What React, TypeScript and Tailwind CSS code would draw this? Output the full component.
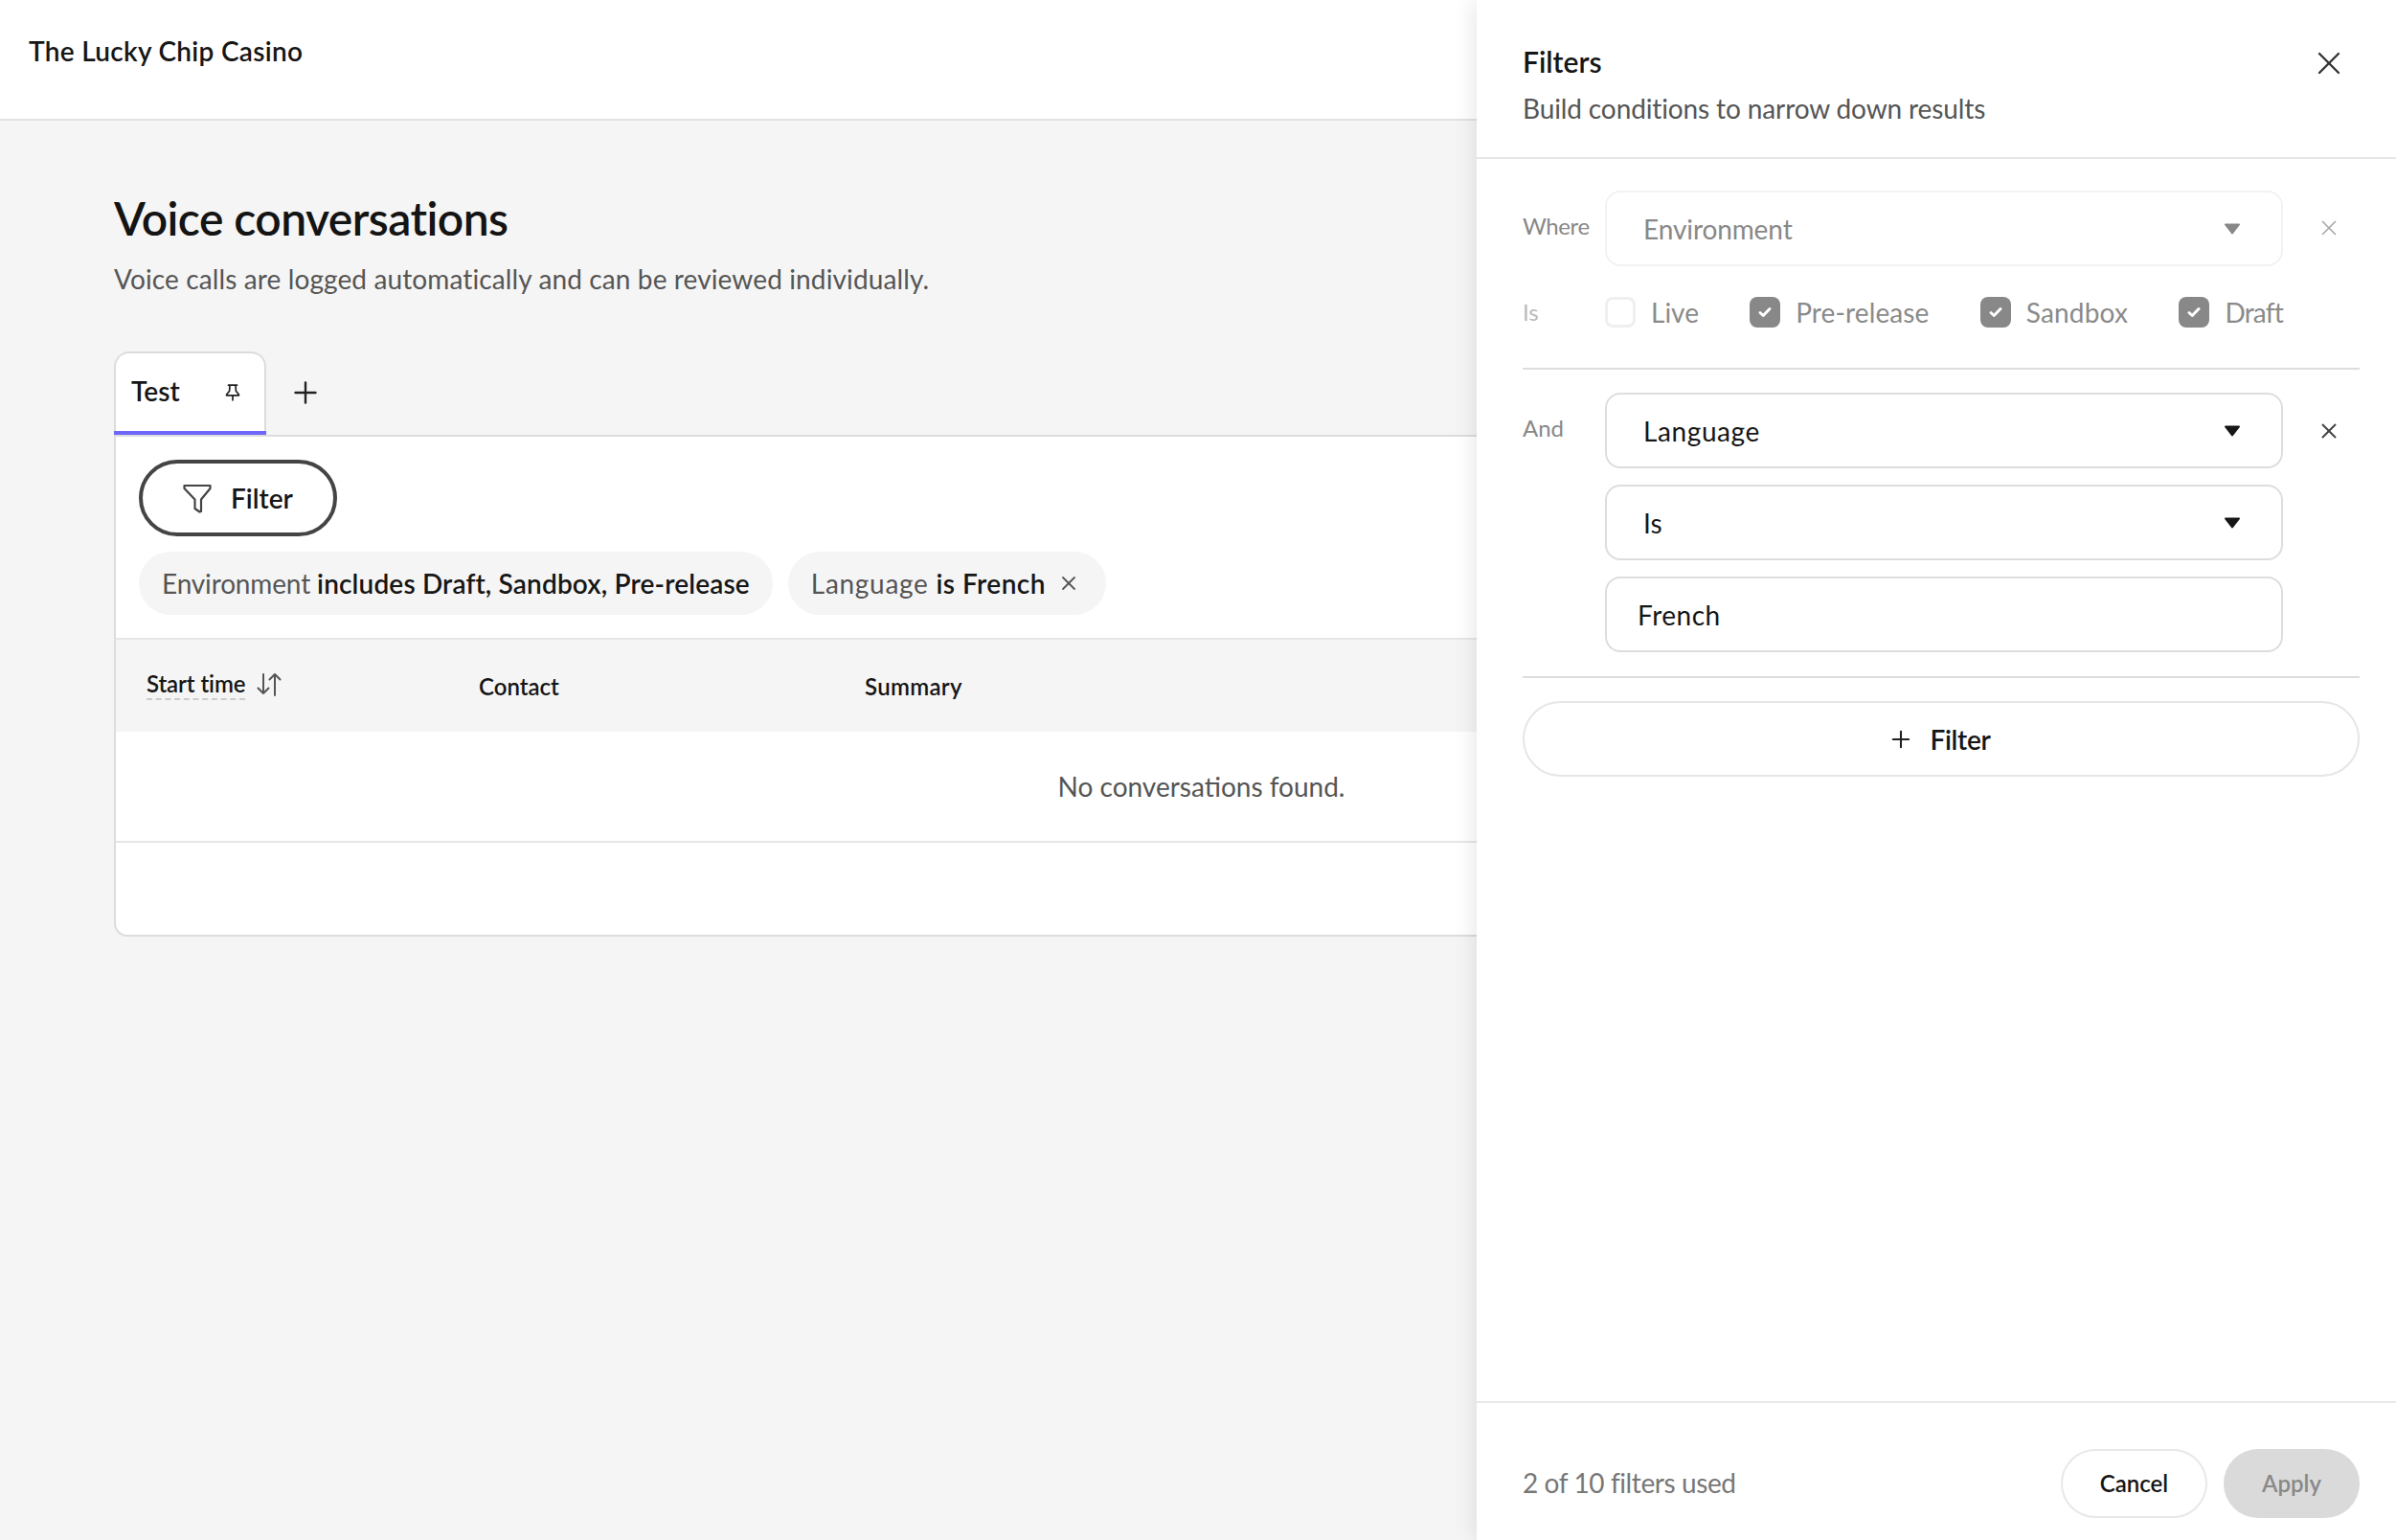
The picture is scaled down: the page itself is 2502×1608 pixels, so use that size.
import { Plus, X } from 'lucide-react';

function PinIcon() {
  return (
    <svg width="16" height="18" viewBox="0 0 16 18" fill="none" stroke="#222" strokeWidth="1.7" strokeLinecap="round" strokeLinejoin="round">
      <path d="M3.5 1.2h9M5 1.2l-.4 6L1.6 11v.8h12.8V11l-3-3.8-.4-6M8 11.8v5" />
    </svg>
  );
}

function FunnelIcon() {
  return (
    <svg width="32" height="32" viewBox="0 0 32 32" fill="none" stroke="#444" strokeWidth="2.2" strokeLinejoin="round" strokeLinecap="round">
      <path d="M2.5 3h27v3L20 17.5V30l-1.5.5-5-3.5V17.5L2.5 6z" />
    </svg>
  );
}

function SortIcon() {
  return (
    <svg width="26" height="26" viewBox="0 0 26 26" fill="none" stroke="#555" strokeWidth="2" strokeLinecap="round" strokeLinejoin="round">
      <path d="M7 2v20M1.5 16.5 7 22l5.5-5.5" />
      <path d="M19 24V2M13.5 7.5 19 2l5.5 5.5" />
    </svg>
  );
}

function Caret({ color }: { color: string }) {
  return (
    <svg width="18" height="12" viewBox="0 0 18 12">
      <path d="M2 1.5h14L9 10.5z" fill={color} stroke={color} strokeWidth="2" strokeLinejoin="round" />
    </svg>
  );
}

function Check({ label, checked, labelClass }: { label: string; checked?: boolean; labelClass?: string }) {
  return (
    <div className="flex items-center gap-[16px]">
      {checked ? (
        <div className="w-[32px] h-[32px] rounded-[8px] bg-[#888888] flex items-center justify-center">
          <svg width="16" height="14" viewBox="0 0 16 14" fill="none" stroke="#fff" strokeWidth="3" strokeLinecap="round" strokeLinejoin="round">
            <path d="M3 7.5l3.2 3L13 3.5" />
          </svg>
        </div>
      ) : (
        <div className="w-[32px] h-[32px] rounded-[8px] border-[3px] border-[#efefef] bg-white" />
      )}
      <span className={`text-[28px] leading-[36px] text-[#8a8a8a] ${labelClass ?? ''}`}>{label}</span>
    </div>
  );
}

function Select({ label, muted, labelClass }: { label: string; muted?: boolean; labelClass?: string }) {
  return (
    <div
      className={`h-[79px] w-[708px] rounded-[16px] border-2 bg-white flex items-center justify-between pl-[38px] pr-[42px] text-[28px] ${
        muted ? 'border-[#f2f2f2] text-[#888888]' : 'border-[#dddddd] text-[#161616]'
      }`}
    >
      <span className={labelClass}>{label}</span>
      <Caret color={muted ? '#888888' : '#161616'} />
    </div>
  );
}

export default function App() {
  return (
    <div className="relative w-[2502px] h-[1608px] overflow-hidden bg-[#f5f5f5] font-['Lato',sans-serif] text-[#161616]">
      <header className="h-[126px] bg-white border-b-2 border-[#e2e2e2] pl-[30px] pt-[33px]">
        <span className="text-[28px] leading-[40px] font-semibold tracking-[0.3px]">The Lucky Chip Casino</span>
      </header>

      <main className="pl-[119px] pr-[112px] pt-[74px]">
        <h1 className="text-[48px] leading-[56px] font-semibold text-[#141414] tracking-[-0.55px]">Voice conversations</h1>
        <p className="mt-[17px] text-[28px] leading-[36px] text-[#555555] tracking-[0.12px]">
          Voice calls are logged automatically and can be reviewed individually.
        </p>

        <div className="mt-[58px] flex items-start">
          <div className="w-[159px] h-[87px] flex flex-col">
            <div className="flex-1 bg-white border-2 border-b-0 border-[#dcdcdc] rounded-t-[16px] flex items-start justify-between pl-[16px] pr-[25px] pt-[21px]">
              <span className="text-[28px] leading-[36px] font-semibold">Test</span>
              <div className="mt-[11px]">
                <PinIcon />
              </div>
            </div>
            <div className="h-[4px] bg-[#6e66fa]" />
          </div>
          <Plus size={36} strokeWidth={1.6} className="ml-[23px] mt-[25px]" color="#222" />
        </div>

        <section className="bg-white border-2 border-[#dcdcdc] rounded-b-[14px] h-[524px]">
          <div className="px-[24px] pt-[24px] pb-[24px]">
            <button className="h-[80px] w-[207px] rounded-full border-[4px] border-[#444444] flex items-center pl-[41px] gap-[19px] text-[28px] font-semibold">
              <FunnelIcon />
              <span>Filter</span>
            </button>
            <div className="mt-[16px] flex gap-[16px]">
              <div className="h-[66px] px-[24px] rounded-full bg-[#f5f5f5] flex items-center text-[28px] text-[#555555] whitespace-pre">
                <span className="tracking-[-0.15px]">Environment </span>
                <span className="font-semibold text-[#161616] tracking-[0.16px]">includes Draft, Sandbox, Pre-release</span>
              </div>
              <div className="h-[66px] pl-[24px] pr-[27px] rounded-full bg-[#f5f5f5] flex items-center text-[28px] text-[#555555] whitespace-pre">
                <span className="tracking-[0.7px]">Language </span>
                <span className="font-semibold text-[#161616] tracking-[0.45px]">is French</span>
                <X size={24} strokeWidth={1.8} className="ml-[12px]" color="#555" />
              </div>
            </div>
          </div>

          <div className="h-[98px] border-t-2 border-[#e6e6e6] bg-[#f5f5f5] grid grid-cols-[347px_403px_1fr] items-center pl-[32px] pt-[2px] text-[24px] font-semibold">
            <div className="flex items-center gap-[12px] -mt-[4px]">
              <span className="border-b-2 border-dashed border-[#cccccc] leading-[30px] tracking-[-0.1px]">Start time</span>
              <SortIcon />
            </div>
            <div>Contact</div>
            <div className="tracking-[0.3px]">Summary</div>
          </div>

          <div className="h-[116px] border-b-2 border-[#e6e6e6] flex items-center justify-center text-[28px] text-[#555555]">
            No conversations found.
          </div>
        </section>
      </main>

      <aside className="absolute top-0 right-0 bottom-0 w-[960px] bg-white shadow-[0_0_24px_rgba(0,0,0,0.12)] flex flex-col">
        <div className="h-[166px] shrink-0 border-b-2 border-[#e6e6e6] pl-[48px] pr-[50px] pt-[46px] flex justify-between items-start">
          <div>
            <div className="text-[30px] leading-[38px] font-semibold -mt-[1px]">Filters</div>
            <div className="mt-[12px] text-[28px] leading-[36px] text-[#555555] tracking-[-0.12px]">Build conditions to narrow down results</div>
          </div>
          <X size={40} strokeWidth={1.4} color="#333" />
        </div>

        <div className="flex-1 pl-[48px] pr-[38px] pt-[33px]">
          <div className="flex">
            <div className="w-[86px] pt-[21px] text-[24px] leading-[32px] text-[#888888] tracking-[-0.4px]">Where</div>
            <Select label="Environment" muted labelClass="tracking-[-0.1px]" />
            <X size={26} strokeWidth={1.6} className="ml-[35px] mt-[26px]" color="#aaa" />
          </div>
          <div className="flex mt-[30px] items-center">
            <div className="w-[86px] text-[24px] text-[#bbbbbb]">Is</div>
            <div className="w-[708px] flex justify-between">
              <Check label="Live" />
              <Check label="Pre-release" checked labelClass="tracking-[0.12px]" />
              <Check label="Sandbox" checked labelClass="tracking-[0.2px]" />
              <Check label="Draft" checked labelClass="tracking-[-0.8px]" />
            </div>
          </div>

          <div className="h-[2px] bg-[#dddddd] mt-[40px]" />

          <div className="flex mt-[24px]">
            <div className="w-[86px] pt-[21px] text-[24px] leading-[32px] text-[#888888]">And</div>
            <div className="flex flex-col gap-[17px]">
              <Select label="Language" labelClass="tracking-[0.6px]" />
              <Select label="Is" />
              <div className="h-[79px] w-[708px] rounded-[16px] border-2 border-[#dddddd] flex items-center pl-[32px] text-[28px] tracking-[0.5px]">French</div>
            </div>
            <X size={26} strokeWidth={1.8} className="ml-[35px] mt-[27px]" color="#444" />
          </div>

          <div className="h-[2px] bg-[#dddddd] mt-[25px]" />

          <button className="mt-[24px] h-[79px] w-full rounded-full border-2 border-[#e6e6e6] flex items-center justify-center gap-[16px] pr-[4px] text-[28px] font-semibold">
            <Plus size={28} strokeWidth={1.8} color="#222" />
            <span className="tracking-[-0.3px]">Filter</span>
          </button>
        </div>

        <div className="h-[145px] shrink-0 border-t-2 border-[#e8e8e8] pl-[48px] pr-[38px] pt-[48px] flex justify-between items-start">
          <span className="text-[28px] leading-[70px] text-[#777777] tracking-[-0.4px]">2 of 10 filters used</span>
          <div className="flex gap-[17px]">
            <button className="w-[153px] h-[72px] rounded-full border-2 border-[#e8e8e8] text-[24px] font-semibold">Cancel</button>
            <button className="w-[142px] h-[72px] rounded-full bg-[#dadada] text-[24px] font-semibold text-[#888888]">Apply</button>
          </div>
        </div>
      </aside>
    </div>
  );
}
